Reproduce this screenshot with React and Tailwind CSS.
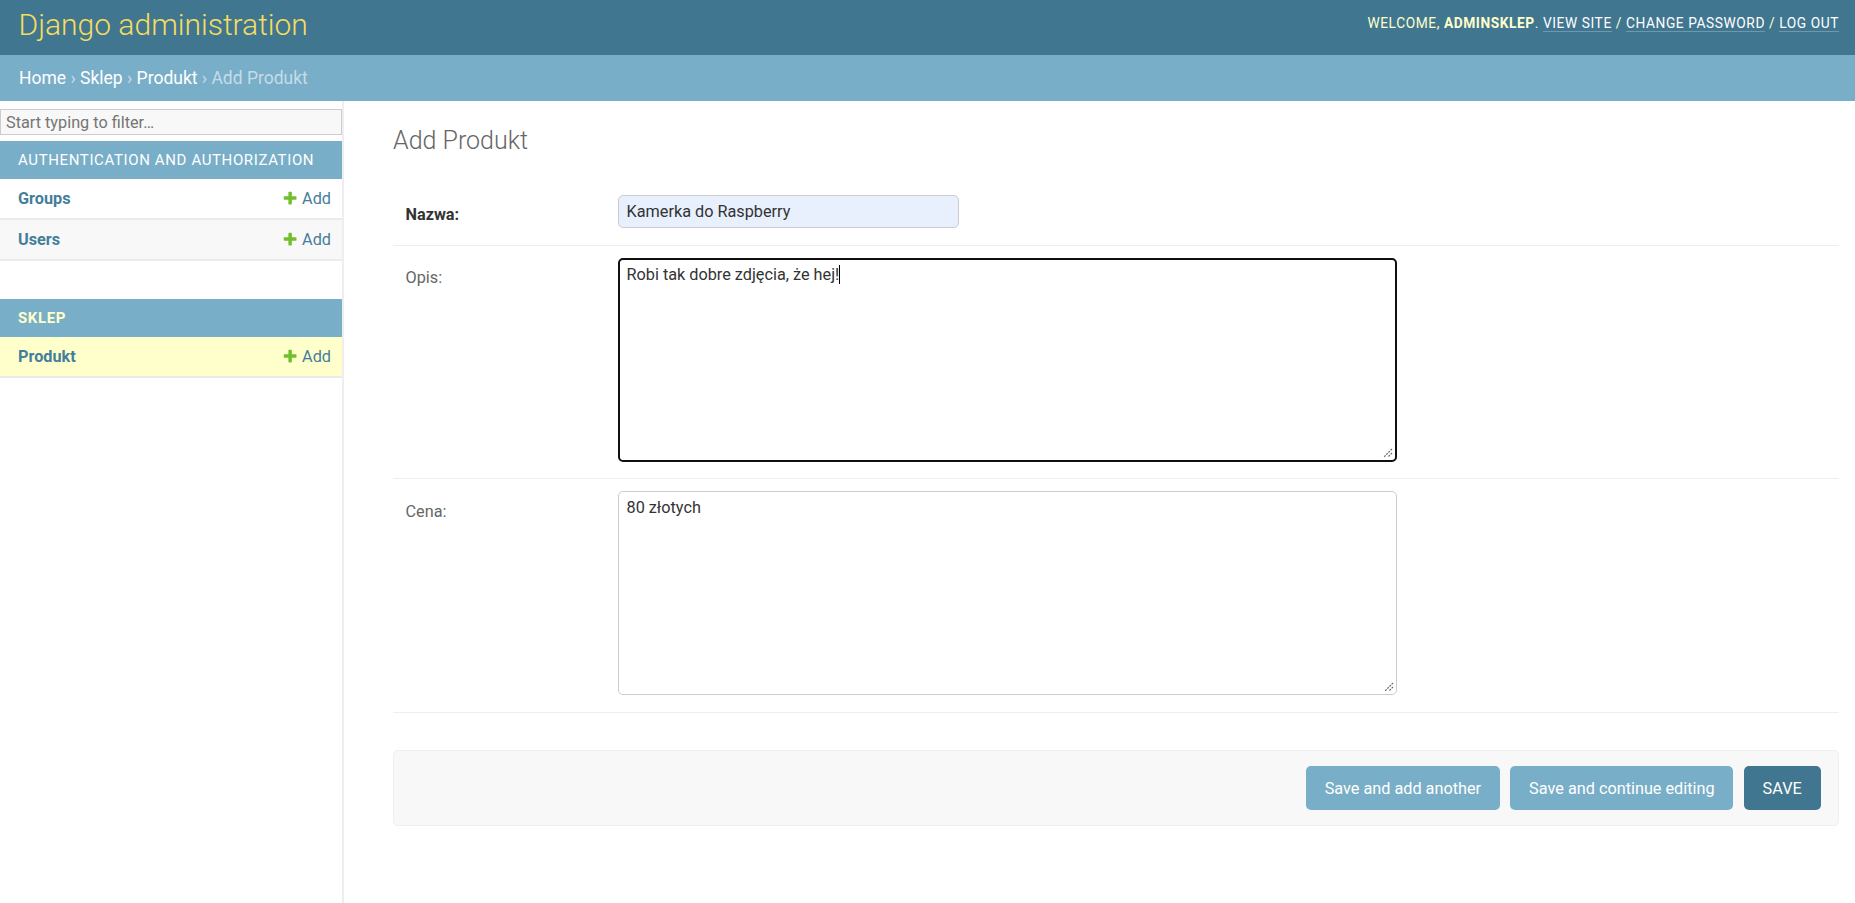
import React from "react";

function AddIcon() {
  return (
    <svg viewBox="0 0 1792 1792" className="w-[16.25px] h-[16.25px] shrink-0">
      <path
        fill="#70bf2b"
        d="M1600 796v192q0 40-28 68t-68 28h-416v416q0 40-28 68t-68 28h-192q-40 0-68-28t-28-68v-416h-416q-40 0-68-28t-28-68v-192q0-40 28-68t68-28h416v-416q0-40 28-68t68-28h192q40 0 68 28t28 68v416h416q40 0 68 28t28 68z"
      />
    </svg>
  );
}

function Grip() {
  return (
    <svg width="11" height="11" viewBox="0 0 11 11" className="absolute right-[2px] bottom-[2px]">
      <path d="M10 2 L2 10 M10 6 L6 10" stroke="#666" strokeWidth="1.2" strokeDasharray="2 1" />
    </svg>
  );
}

function ModelRow({ name, bg }) {
  return (
    <div className={`flex items-center justify-between pl-[18px] pr-[11px] py-[10px] leading-[19px] border-b-2 border-[#ebebeb] ${bg}`}>
      <span className="font-bold text-[#447e9b]">{name}</span>
      <span className="flex items-center gap-[3.75px] text-[#447e9b]">
        <AddIcon />
        Add
      </span>
    </div>
  );
}

export default function App() {
  return (
    <div className="min-h-screen flex flex-col bg-white font-[Roboto,sans-serif] text-[#333] text-[16.25px]">
      {/* Header */}
      <header className="h-[55px] shrink-0 bg-[#417690] flex justify-between items-start pl-[18.5px] pr-[16px]">
        <h1 className="mt-[9.8px] text-[30px] font-light leading-none text-[#f5dd5d]">
          Django administration
        </h1>
        <div className="mt-[16.7px] text-[13.75px] leading-none tracking-[0.57px] text-[#ffc]">
          WELCOME, <strong className="font-bold">ADMINSKLEP</strong>.{" "}
          <a className="text-white border-b border-white/25">VIEW SITE</a> /{" "}
          <a className="text-white border-b border-white/25">CHANGE PASSWORD</a> /{" "}
          <a className="text-white border-b border-white/25">LOG OUT</a>
        </div>
      </header>

      {/* Breadcrumbs */}
      <div className="shrink-0 bg-[#79aec8] pl-[19px] py-[12.5px] text-[17.5px] leading-[20.7px] text-[#c4dce8]">
        <a className="text-white">Home</a> › <a className="text-white">Sklep</a> ›{" "}
        <a className="text-white">Produkt</a> › Add Produkt
      </div>

      <div className="flex flex-1">
        {/* Sidebar */}
        <nav className="w-[344px] shrink-0 border-r-2 border-[#eeeeee]">
          <div className="mt-[8.3px] h-[26px] border border-[#cccccc] bg-[#f8f8f8] px-[5px] py-[2.5px] leading-[19px] text-[#757575]">
            Start typing to filter…
          </div>

          <div className="mt-[6px]">
            <div className="bg-[#79aec8] pl-[18px] py-[9.5px] text-[15px] leading-[19px] tracking-[0.625px] text-white">
              AUTHENTICATION AND AUTHORIZATION
            </div>
            <ModelRow name="Groups" bg="bg-white" />
            <ModelRow name="Users" bg="bg-[#f8f8f8]" />
          </div>

          <div className="mt-[38px]">
            <div className="bg-[#79aec8] pl-[18px] py-[9.5px] text-[15px] leading-[19px] tracking-[0.625px] font-bold text-[#ffc]">
              SKLEP
            </div>
            <ModelRow name="Produkt" bg="bg-[#ffffcc]" />
          </div>
        </nav>

        {/* Content */}
        <main className="flex-1 pl-[49px] pr-[16px] pt-[25.5px]">
          <h1 className="text-[25px] font-light leading-[29.3px] text-[#666] mb-[26px]">Add Produkt</h1>

          <div>
            <div className="flex items-start pl-[12.5px] pt-[12px] pb-[16.5px] border-b border-[#eeeeee]">
              <label className="w-[212.5px] shrink-0 pt-[13.5px] leading-none font-bold text-[#333]">Nazwa:</label>
              <div className="mt-[1px] w-[341px] h-[33.5px] border border-[#cccccc] rounded-[5px] bg-[#e8f0fe] px-[7.5px] py-[6.25px] leading-[19px] text-[#333]">
                Kamerka do Raspberry
              </div>
            </div>

            <div className="flex items-start pl-[12.5px] pt-[12px] pb-[16.5px] border-b border-[#eeeeee]">
              <label className="w-[212.5px] shrink-0 pt-[12.5px] leading-none text-[#666]">Opis:</label>
              <div className="relative w-[779px] h-[204px] border-2 border-[#101010] rounded-[5px] bg-white px-[6.5px] py-[5.25px] leading-[19px] text-[#333]">
                Robi tak dobre zdjęcia, że hej!
                <span className="inline-block w-px h-[19px] bg-black align-[-4px]" />
                <Grip />
              </div>
            </div>

            <div className="flex items-start pl-[12.5px] pt-[12px] pb-[16.5px] border-b border-[#eeeeee]">
              <label className="w-[212.5px] shrink-0 pt-[12.5px] leading-none text-[#666]">Cena:</label>
              <div className="relative w-[779px] h-[204px] border border-[#cccccc] rounded-[5px] bg-white px-[7.5px] py-[6.25px] leading-[19px] text-[#333]">
                80 złotych
                <Grip />
              </div>
            </div>
          </div>

          {/* Submit row */}
          <div className="mt-[37.5px] flex justify-end gap-[10.5px] px-[17.5px] py-[15px] bg-[#f8f8f8] border border-[#eeeeee] rounded-[5px]">
            <button className="h-[44px] px-[18.75px] rounded-[5px] bg-[#79aec8] text-white leading-[19px]">
              Save and add another
            </button>
            <button className="h-[44px] px-[18.75px] rounded-[5px] bg-[#79aec8] text-white leading-[19px]">
              Save and continue editing
            </button>
            <button className="h-[44px] px-[18.75px] rounded-[5px] bg-[#417690] text-white leading-[19px]">
              SAVE
            </button>
          </div>
        </main>
      </div>
    </div>
  );
}
